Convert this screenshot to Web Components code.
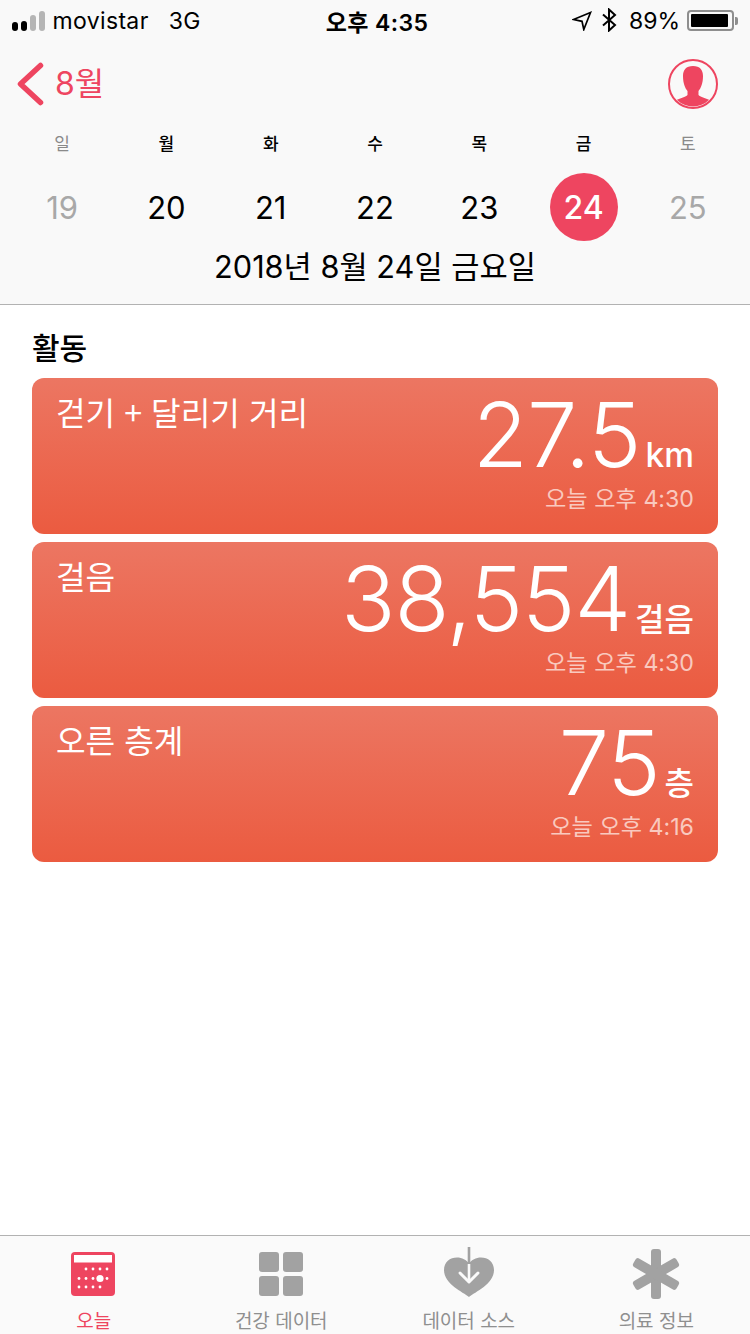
<!DOCTYPE html>
<html lang="ko">
<head>
<meta charset="utf-8">
<title>건강</title>
<style>
  html, body { margin: 0; height: 100%; background: #fff; }
  body { font-family: Inter, "Noto Sans CJK KR", sans-serif; width: 750px; height: 1334px; overflow: hidden; display: flex; flex-direction: column; }
  app-main { flex: 1; }
</style>
</head>
<body>
<app-header></app-header>
<app-main>
  <activity-card label="걷기 + 달리기 거리" value="27.5" unit="km" unit-size="33.500" time="오늘 오후 4:30"></activity-card>
  <activity-card label="걸음" value="38,554" unit="걸음" time="오늘 오후 4:30"></activity-card>
  <activity-card label="오른 층계" value="75" unit="층" time="오늘 오후 4:16"></activity-card>
</app-main>
<tab-bar>
  <tab-item label="오늘" active>
    <svg viewBox="0 0 44 44" width="44" height="44" style="margin-right:2px"><rect width="44" height="44" rx="4" fill="#ee4560"/><rect x="3" y="3" width="38" height="7.500" fill="#fff"/>
      <g fill="#fff"><circle cx="15" cy="17" r="1.400"/><circle cx="22" cy="17" r="1.400"/><circle cx="29" cy="17" r="1.400"/><circle cx="36" cy="17" r="1.400"/><circle cx="8" cy="26.500" r="1.400"/><circle cx="15" cy="26.500" r="1.400"/><circle cx="22" cy="26.500" r="1.400"/><circle cx="29" cy="26.500" r="3.600"/><circle cx="36" cy="26.500" r="1.400"/><circle cx="8" cy="35" r="1.400"/><circle cx="15" cy="35" r="1.400"/><circle cx="22" cy="35" r="1.400"/><circle cx="29" cy="35" r="1.400"/></g></svg>
  </tab-item>
  <tab-item label="건강 데이터">
    <svg viewBox="0 0 44 44" width="44" height="44"><g fill="#a2a2a2"><rect width="20" height="20" rx="3"/><rect x="24" width="20" height="20" rx="3"/><rect y="24" width="20" height="20" rx="3"/><rect x="24" y="24" width="20" height="20" rx="3"/></g></svg>
  </tab-item>
  <tab-item label="데이터 소스">
    <svg viewBox="0 0 50 50" width="50" height="50" style="margin-top:-5px;margin-bottom:-1px"><path d="M25 50 C19 45 0 37 0 23 C0 15 6 10.500 13 10.500 C18 10.500 22.500 13 25 16.500 C27.500 13 32 10.500 37 10.500 C44 10.500 50 15 50 23 C50 37 31 45 25 50Z" fill="#a2a2a2"/><path d="M25 0V17" stroke="#a2a2a2" stroke-width="2.600" fill="none"/><path d="M25 17V35" stroke="#fafafa" stroke-width="2.600" fill="none"/><path d="M16 26 L25 35 L34 26" stroke="#fafafa" stroke-width="3" fill="none" stroke-linecap="round" stroke-linejoin="round"/></svg>
  </tab-item>
  <tab-item label="의료 정보">
    <svg viewBox="0 0 50 50" width="50" height="50" style="margin-top:-3px;margin-bottom:-3px"><g fill="#a2a2a2"><rect x="20" y="0" width="10" height="50" rx="3"/><rect x="20" y="0" width="10" height="50" rx="3" transform="rotate(60 25 25)"/><rect x="20" y="0" width="10" height="50" rx="3" transform="rotate(-60 25 25)"/></g></svg>
  </tab-item>
</tab-bar>

<script>
function shadow(host, html) {
  host.attachShadow({ mode: 'open' }).innerHTML = html
}

class StatusBar extends HTMLElement {
  connectedCallback() {
    shadow(this, `<style>
      :host { display: grid; grid-template-columns: 1fr auto 1fr; align-items: center; height: 42px; margin-bottom: -2px; padding: 0 12px; font-size: 23px; color: #000; }
      .l, .r { display: flex; align-items: center; }
      .r { justify-content: flex-end; }
      .dots { display: flex; align-items: flex-end; gap: 3.500px; margin-right: 8px; height: 20px; }
      .dots i { width: 5.500px; background: #000; border-radius: 3px; display: block; }
      .dots i.off { background: #b5b5b5; }
      .c { font-weight: 600; letter-spacing: .4px; margin-left: 4px; }
      .l span { letter-spacing: .35px; }
      .net { margin-left: 20px; }
      .batt { display: flex; align-items: center; margin-left: 7px; margin-bottom: 1px; }
      .shell { width: 47px; height: 21px; box-sizing: border-box; border: 2px solid #8e8e8e; border-radius: 4px; padding: 2px; }
      .shell div { width: 37px; height: 13px; background: #000; border-radius: 1px; }
      .tip { width: 3px; height: 8px; background: #8e8e8e; border-radius: 0 2px 2px 0; margin-left: 1px; }
    </style>
    <div class="l">
      <div class="dots"><i style="height:9px"></i><i style="height:10px"></i><i class="off" style="height:16px"></i><i class="off" style="height:20px"></i></div>
      <span>movistar</span><span class="net">3G</span>
    </div>
    <div class="c">오후 4:35</div>
    <div class="r">
      <svg width="20" height="20" viewBox="0 0 20 20" style="margin:0 9px 0 0"><path d="M18.500 1.500 L1.500 8.500 L10 10.300 L11.800 18.500Z" fill="none" stroke="#000" stroke-width="1.700" stroke-linejoin="miter"/></svg>
      <svg width="16" height="24" viewBox="0 0 16 24" style="margin:0 12px 2px 0"><path d="M2 6.500 L14 17 L8 22.500 V1.500 L14 7 L2 17.500" fill="none" stroke="#000" stroke-width="2"/></svg>
      <span>89%</span>
      <div class="batt"><div class="shell"><div></div></div><div class="tip"></div></div>
    </div>`)
  }
}
customElements.define('status-bar', StatusBar)

class WeekStrip extends HTMLElement {
  connectedCallback() {
    const days = [['일', 19, 'off'], ['월', 20], ['화', 21], ['수', 22], ['목', 23], ['금', 24, 'now'], ['토', 25, 'off']]
    shadow(this, `<style>
      :host { display: grid; grid-template-columns: repeat(7, 1fr); padding: 0 10px; }
      .d { display: flex; flex-direction: column; align-items: center; }
      .n { font-size: 17px; font-weight: 500; height: 26px; line-height: 26px; color: #000; font-family: "Noto Sans CJK KR", sans-serif; }
      .v { margin-top: 17px; width: 68px; height: 68px; line-height: 70px; text-align: center; border-radius: 50%; font-size: 31px; color: #000; }
      .off .n { color: #8a8a8a; font-weight: 400; }
      .off .v { color: #a8a8a8; }
      .now .v { background: #ee4560; color: #fff; font-size: 32px; font-weight: 500; }
    </style>` + days.map(d => `<div class="d ${d[2] || ''}"><div class="n">${d[0]}</div><div class="v">${d[1]}</div></div>`).join(''))
  }
}
customElements.define('week-strip', WeekStrip)

class AppHeader extends HTMLElement {
  connectedCallback() {
    shadow(this, `<style>
      :host { display: block; height: 305px; box-sizing: border-box; background: #f9f9f9; border-bottom: 1px solid #b2b2b2; }
      .nav { display: flex; align-items: center; justify-content: space-between; height: 90px; padding: 0 32px 0 16px; box-sizing: border-box; }
      .nav > svg { margin-bottom: 2px; }
      .back { display: flex; align-items: center; color: #ee4560; font-size: 32px; gap: 11px; margin-bottom: 2px; }
      .back span { padding-bottom: 6px; }
      .date { text-align: center; font-size: 30.700px; line-height: 44px; margin-top: 4px; color: #000; }
    </style>
    <status-bar></status-bar>
    <div class="nav">
      <div class="back">
        <svg width="28" height="44" viewBox="0 0 28 44"><path d="M24.500 3.500 L4.500 22 L24.500 40.500" fill="none" stroke="#ee4560" stroke-width="5.500" stroke-linecap="round" stroke-linejoin="round"/></svg>
        <span>8월</span>
      </div>
      <svg width="50" height="50" viewBox="0 0 50 50"><defs><clipPath id="c"><circle cx="25" cy="25" r="22.500"/></clipPath></defs><circle cx="25" cy="25" r="24" fill="none" stroke="#ee4560" stroke-width="2"/><path clip-path="url(#c)" d="M25 7 C32 7 35 11 35 17 C35 24 33 29 30.500 32 V36 C33 39 41 39.500 44 43 V50 H6 V43 C9 39.500 17 39 19.500 36 V32 C17 29 15 24 15 17 C15 11 18 7 25 7Z" fill="#ee4560"/></svg>
    </div>
    <week-strip></week-strip>
    <div class="date">2018년 8월 24일 금요일</div>`)
  }
}
customElements.define('app-header', AppHeader)

class AppMain extends HTMLElement {
  connectedCallback() {
    shadow(this, `<style>
      :host { display: flex; flex-direction: column; gap: 8px; padding: 0 32px; }
      h2 { margin: 21px 0 4px; font-size: 30px; line-height: 40px; font-weight: 500; color: #000; font-family: "Noto Sans CJK KR", sans-serif; }
    </style>
    <h2>활동</h2><slot></slot>`)
  }
}
customElements.define('app-main', AppMain)

class ActivityCard extends HTMLElement {
  connectedCallback() {
    const a = n => this.getAttribute(n)
    shadow(this, `<style>
      :host { display: flex; justify-content: space-between; height: 156px; box-sizing: border-box; padding: 12px 24px 0 24px; border-radius: 12px; color: #fff; background: linear-gradient(#ec7662, #eb5b40); }
      .label { font-size: 32.200px; line-height: 38px; margin-top: 2px; font-family: "Noto Sans CJK KR", sans-serif; }
      .side { display: flex; flex-direction: column; align-items: flex-end; }
      .big { display: flex; align-items: baseline; gap: 5px; height: 88px; line-height: 90px; }
      .value { font-size: 90px; font-weight: 300; letter-spacing: -1px; }
      .unit { font-size: ${a('unit-size') || 32}px; font-weight: 500; font-family: Inter, "Noto Sans CJK KR", sans-serif; }
      .time { font-size: 23.200px; line-height: 34px; margin-top: 4px; color: #f9c9bf; }
    </style>
    <div class="label">${a('label')}</div>
    <div class="side">
      <div class="big"><span class="value">${a('value')}</span><span class="unit">${a('unit')}</span></div>
      <div class="time">${a('time')}</div>
    </div>`)
  }
}
customElements.define('activity-card', ActivityCard)

class TabBar extends HTMLElement {
  connectedCallback() {
    shadow(this, `<style>
      :host { display: grid; grid-template-columns: repeat(4, 1fr); height: 99px; box-sizing: border-box; background: #fafafa; border-top: 1px solid #b2b2b2; }
    </style><slot></slot>`)
  }
}
customElements.define('tab-bar', TabBar)

class TabItem extends HTMLElement {
  connectedCallback() {
    shadow(this, `<style>
      :host { display: flex; flex-direction: column; align-items: center; padding-top: 16px; color: #8f8f8f; font-size: 19px; }
      :host([active]) { color: #ee4560; }
      .t { line-height: 28px; margin-top: 10px; white-space: nowrap; font-family: "Noto Sans CJK KR", sans-serif; }
    </style><slot></slot><div class="t">${this.getAttribute('label')}</div>`)
  }
}
customElements.define('tab-item', TabItem)
</script>
</body>
</html>
